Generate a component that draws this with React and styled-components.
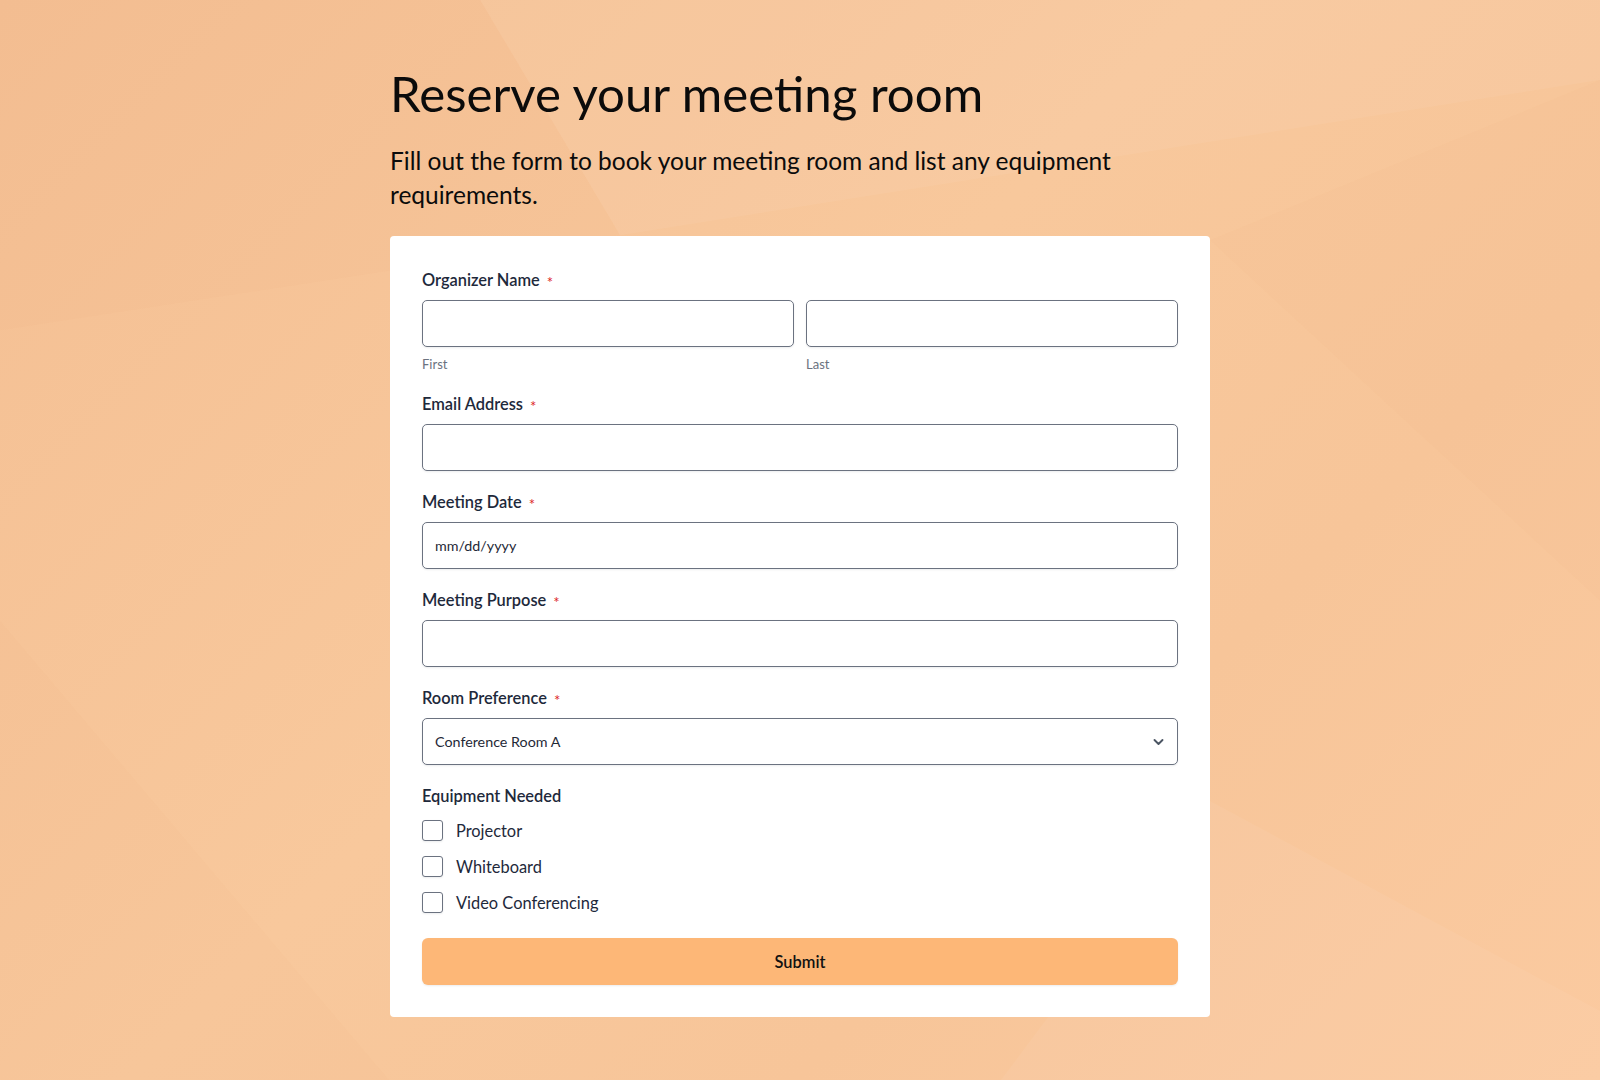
import React from "react";
import styled, { createGlobalStyle } from "styled-components";

const GlobalStyle = createGlobalStyle`
  html, body {
    margin: 0;
    padding: 0;
  }
  body {
    font-family: Lato, "Open Sans", Arial, sans-serif;
    background: #f7c598;
    -webkit-font-smoothing: antialiased;
  }
  * { box-sizing: border-box; }
`;

const Page = styled.div`
  position: relative;
  min-height: 1080px;
  overflow: hidden;
  background: linear-gradient(135deg, #f4bf93 0%, #f8c89c 45%, #f7c599 70%, #fbcaa0 100%);
`;

const Backdrop = styled.svg`
  position: absolute;
  inset: 0;
  width: 100%;
  height: 100%;
  pointer-events: none;
`;

const Column = styled.main`
  position: relative;
  width: 820px;
  margin: 0 auto;
  padding: 64px 0 64px;
`;

const Title = styled.h1`
  margin: 0;
  font-family: Lato, sans-serif;
  font-weight: 400;
  font-size: 49.2px;
  line-height: 58px;
  color: #0b0b0b;
`;

const Subtitle = styled.p`
  margin: 22px 0 0;
  font-size: 24.5px;
  line-height: 33.6px;
  color: #0b0b0b;
  font-weight: 400;
`;

const Card = styled.form`
  margin-top: 25px;
  background: #ffffff;
  border-radius: 4px;
  padding: 32px;
  display: flex;
  flex-direction: column;
`;

const Field = styled.div`
  display: flex;
  flex-direction: column;
  margin-bottom: ${(p) => (p.$last ? "22px" : "19px")};
`;

const Label = styled.label`
  display: flex;
  align-items: center;
  gap: 7px;
  font-size: 16.4px;
  line-height: 24px;
  font-weight: 600;
  color: #1e293b;
  margin-bottom: 8px;
`;

const Required = styled.span`
  color: #dc2626;
  font-size: 15px;
  font-weight: 400;
  line-height: 1;
  position: relative;
  top: 2px;
`;

const Row = styled.div`
  display: grid;
  grid-template-columns: 1fr 1fr;
  gap: 12px;
`;

const Sub = styled.div`
  display: flex;
  flex-direction: column;
`;

const Input = styled.input`
  width: 100%;
  height: 47px;
  border: 1px solid #6b7280;
  border-radius: 5px;
  padding: 0 12px;
  font-family: Lato, sans-serif;
  font-size: 14.3px;
  color: #1f2937;
  background: #fff;
  box-shadow: 0 1px 2px rgba(15, 23, 42, 0.08);
  outline: none;
  &::placeholder {
    color: #1f2937;
    opacity: 1;
  }
`;

const Hint = styled.span`
  margin-top: 9px;
  font-size: 13px;
  line-height: 17px;
  color: #6b7280;
`;

const SelectWrap = styled.div`
  position: relative;
`;

const Select = styled.select`
  width: 100%;
  height: 47px;
  border: 1px solid #6b7280;
  border-radius: 5px;
  padding: 0 40px 0 12px;
  font-family: Lato, sans-serif;
  font-size: 14.3px;
  color: #1f2937;
  background: #fff;
  appearance: none;
  -webkit-appearance: none;
  box-shadow: 0 1px 2px rgba(15, 23, 42, 0.08);
  outline: none;
`;

const Chevron = styled.svg`
  position: absolute;
  right: 14px;
  top: 50%;
  transform: translateY(-50%);
  pointer-events: none;
`;

const CheckList = styled.div`
  display: flex;
  flex-direction: column;
  gap: 8px;
`;

const CheckRow = styled.label`
  display: flex;
  align-items: center;
  gap: 13px;
  height: 28px;
  font-size: 16.4px;
  color: #1e293b;
  cursor: pointer;
`;

const Box = styled.input`
  appearance: none;
  -webkit-appearance: none;
  margin: 0;
  width: 21px;
  height: 21px;
  border: 1px solid #6b7280;
  border-radius: 3px;
  background: #fff;
  box-shadow: 0 1px 2px rgba(15, 23, 42, 0.08);
`;

const Submit = styled.button`
  height: 47px;
  width: 100%;
  border: none;
  border-radius: 6px;
  background: #fdb777;
  color: #111111;
  font-family: Lato, sans-serif;
  font-weight: 600;
  font-size: 16.4px;
  box-shadow: 0 1px 2px rgba(15, 23, 42, 0.08);
  cursor: pointer;
`;

function Req() {
  return <Required>*</Required>;
}

export default function App() {
  const equipment = ["Projector", "Whiteboard", "Video Conferencing"];
  return (
    <>
      <GlobalStyle />
      <Page>
        <Backdrop viewBox="0 0 1600 1080" preserveAspectRatio="none">
          <polygon points="480,0 620,235 1600,80 1600,0" fill="#ffffff" opacity="0.05" />
          <polygon points="0,0 480,0 620,235 0,330" fill="#e8a46a" opacity="0.04" />
          <polygon points="1210,800 1600,1010 1600,1080 1000,1080" fill="#ffffff" opacity="0.05" />
          <polygon points="0,620 390,1080 0,1080" fill="#e8a46a" opacity="0.03" />
          <polygon points="1210,240 1600,80 1600,600" fill="#e8a46a" opacity="0.03" />
        </Backdrop>
        <Column>
          <Title>Reserve your meeting room</Title>
          <Subtitle>
            Fill out the form to book your meeting room and list any equipment requirements.
          </Subtitle>
          <Card onSubmit={(e) => e.preventDefault()}>
            <Field>
              <Label>
                Organizer Name <Req />
              </Label>
              <Row>
                <Sub>
                  <Input type="text" />
                  <Hint>First</Hint>
                </Sub>
                <Sub>
                  <Input type="text" />
                  <Hint>Last</Hint>
                </Sub>
              </Row>
            </Field>
            <Field>
              <Label>
                Email Address <Req />
              </Label>
              <Input type="email" />
            </Field>
            <Field>
              <Label>
                Meeting Date <Req />
              </Label>
              <Input type="text" placeholder="mm/dd/yyyy" />
            </Field>
            <Field>
              <Label>
                Meeting Purpose <Req />
              </Label>
              <Input type="text" />
            </Field>
            <Field>
              <Label>
                Room Preference <Req />
              </Label>
              <SelectWrap>
                <Select defaultValue="Conference Room A">
                  <option>Conference Room A</option>
                  <option>Conference Room B</option>
                  <option>Conference Room C</option>
                </Select>
                <Chevron width="11" height="8" viewBox="0 0 11 8" fill="none">
                  <path d="M1.5 2 L5.5 6 L9.5 2" stroke="#4b5563" strokeWidth="1.9" strokeLinecap="round" strokeLinejoin="round" />
                </Chevron>
              </SelectWrap>
            </Field>
            <Field $last>
              <Label as="div">Equipment Needed</Label>
              <CheckList>
                {equipment.map((item) => (
                  <CheckRow key={item}>
                    <Box type="checkbox" />
                    {item}
                  </CheckRow>
                ))}
              </CheckList>
            </Field>
            <Submit type="submit">Submit</Submit>
          </Card>
        </Column>
      </Page>
    </>
  );
}
